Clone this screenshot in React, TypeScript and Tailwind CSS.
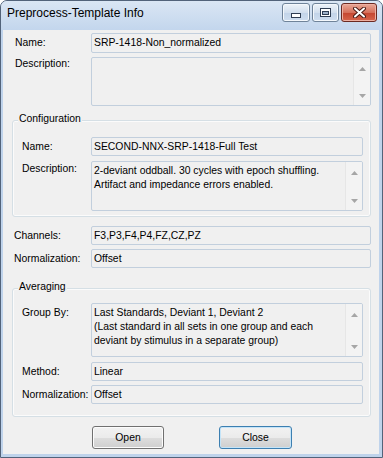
import React from 'react'

function TextBox({ value, w, h }: { value?: string; w: string; h?: string }) {
  return (
    <div className={`${w} ${h ?? 'h-[19px]'} border border-[#c2cfdd] rounded-[2px] px-[2px] pt-[2px] whitespace-nowrap overflow-hidden`}>
      {value}
    </div>
  )
}

function ArrowUp() {
  return (
    <svg width="7" height="4" viewBox="0 0 7 4">
      <path d="M0 4 L3.5 0 L7 4 Z" fill="#a6a6a6" />
    </svg>
  )
}

function ArrowDown() {
  return (
    <svg width="7" height="4" viewBox="0 0 7 4">
      <path d="M0 0 L7 0 L3.5 4 Z" fill="#a6a6a6" />
    </svg>
  )
}

function TextArea({ lines, w, h }: { lines: string[]; w: string; h: string }) {
  return (
    <div className={`${w} ${h} flex border border-[#c2cfdd] rounded-[2px] overflow-hidden`}>
      <div className="flex-1 px-[2px] pt-[2px] whitespace-nowrap overflow-hidden">
        {lines.map((l) => (
          <div key={l}>{l}</div>
        ))}
      </div>
      <div className="w-[17px] bg-[#f3f3f3] border-l border-[#e6e6e6] flex flex-col items-center justify-between pt-[9px] pb-[7px]">
        <ArrowUp />
        <ArrowDown />
      </div>
    </div>
  )
}

function GroupBox({ title, h, pt, children }: { title: string; h: string; pt: string; children: React.ReactNode }) {
  return (
    <div className={`relative ml-[9px] w-[359px] ${h} ${pt} pl-[9px] border border-[#d5dfe5] rounded-[3px] shadow-[inset_0_0_0_1px_#fbfbfb]`}>
      <div className="absolute left-[5px] -top-[9px] px-[1px] bg-[#f0f0f0]">{title}</div>
      {children}
    </div>
  )
}

export default function App() {
  return (
    <div className="w-[383px] h-[458px] font-['Liberation_Sans',Arial,sans-serif] text-[10.4px] leading-[14px] text-black">
      <div className="w-full h-full flex flex-col border border-[#52637a] rounded-t-[7px] bg-[#bfd3eb] overflow-hidden">
        {/* Title bar */}
        <div className="h-[29px] shrink-0 flex items-start bg-[linear-gradient(#dae6f4,#c3d6ed)]">
          <div className="flex-1 pl-[6px] pt-[5px] text-[12px] leading-[15px]">Preprocess-Template Info</div>
          <div className="flex gap-[2px] mt-[2px] mr-[5px]">
            <div className="w-[28px] h-[19px] rounded-[3px] border border-[#6f8399] bg-[linear-gradient(#eef3f9,#d2dfee_50%,#c2d3e8_51%,#cfdeef)] shadow-[inset_0_0_0_1px_#f4f8fc] flex items-end justify-center pb-[3px]">
              <svg width="10" height="5" viewBox="0 0 10 5">
                <rect x="0.5" y="0.5" width="9" height="4" fill="#ffffff" stroke="#2f3d52" />
              </svg>
            </div>
            <div className="w-[27px] h-[19px] rounded-[3px] border border-[#6f8399] bg-[linear-gradient(#eef3f9,#d2dfee_50%,#c2d3e8_51%,#cfdeef)] shadow-[inset_0_0_0_1px_#f4f8fc] flex items-center justify-center">
              <svg width="11" height="9" viewBox="0 0 11 9">
                <rect x="0.5" y="0.5" width="10" height="8" fill="#ffffff" stroke="#2f3d52" />
                <rect x="2.5" y="3.5" width="6" height="3" fill="#9fb2c9" stroke="#2f3d52" />
              </svg>
            </div>
            <div className="w-[36px] h-[19px] rounded-[3px] border border-[#6b2a22] bg-[linear-gradient(#e8a898,#d6705b_50%,#c4452f_51%,#d7654c)] shadow-[inset_0_0_0_1px_#eeb0a2] flex items-center justify-center">
              <svg width="13" height="11" viewBox="0 0 13 11">
                <path d="M2 1.5 L11 9.5 M11 1.5 L2 9.5" stroke="#4a1a14" strokeWidth="4" strokeLinecap="round" />
                <path d="M2 1.5 L11 9.5 M11 1.5 L2 9.5" stroke="#ffffff" strokeWidth="2" strokeLinecap="round" />
              </svg>
            </div>
          </div>
        </div>

        {/* Client area */}
        <div className="ml-[2px] mr-[3px] mb-[3px] h-[424px] bg-[#f0f0f0] pt-[3px]">
          <div className="flex pl-[12px]">
            <div className="w-[76px] pt-[3px]">Name:</div>
            <TextBox value="SRP-1418-Non_normalized" w="w-[280px]" h="h-[20px]" />
          </div>
          <div className="flex pl-[12px] mt-[4px]">
            <div className="w-[76px]">Description:</div>
            <TextArea lines={[]} w="w-[280px]" h="h-[49px]" />
          </div>

          <div className="mt-[14px]">
            <GroupBox title="Configuration" h="h-[97px]" pt="pt-[16px]">
              <div className="flex">
                <div className="w-[69px] pt-[3px]">Name:</div>
                <TextBox value="SECOND-NNX-SRP-1418-Full Test" w="w-[272px]" />
              </div>
              <div className="flex mt-[5px]">
                <div className="w-[69px] pt-[1px]">Description:</div>
                <TextArea
                  lines={['2-deviant oddball. 30 cycles with epoch shuffling.', 'Artifact and impedance errors enabled.']}
                  w="w-[272px]"
                  h="h-[50px]"
                />
              </div>
            </GroupBox>
          </div>

          <div className="flex pl-[11px] mt-[9px]">
            <div className="w-[77px] pt-[3px]">Channels:</div>
            <TextBox value="F3,P3,F4,P4,FZ,CZ,PZ" w="w-[280px]" />
          </div>
          <div className="flex pl-[11px] mt-[4px]">
            <div className="w-[77px] pt-[3px]">Normalization:</div>
            <TextBox value="Offset" w="w-[280px]" />
          </div>

          <div className="mt-[20px]">
            <GroupBox title="Averaging" h="h-[129px]" pt="pt-[14px]">
              <div className="flex">
                <div className="w-[69px] pt-[3px]">Group By:</div>
                <TextArea
                  lines={[
                    'Last Standards, Deviant 1, Deviant 2',
                    '(Last standard in all sets in one group and each',
                    'deviant by stimulus in a separate group)',
                  ]}
                  w="w-[272px]"
                  h="h-[54px]"
                />
              </div>
              <div className="flex mt-[5px]">
                <div className="w-[69px] pt-[3px]">Method:</div>
                <TextBox value="Linear" w="w-[272px]" />
              </div>
              <div className="flex mt-[4px]">
                <div className="w-[69px] pt-[3px] whitespace-nowrap">Normalization:</div>
                <TextBox value="Offset" w="w-[272px]" />
              </div>
            </GroupBox>
          </div>

          <div className="flex mt-[9px] pl-[89px]">
            <button className="w-[72px] h-[23px] rounded-[3px] border border-[#707070] bg-[linear-gradient(#f2f2f2,#ebebeb_50%,#dddddd_51%,#cfcfcf)] shadow-[inset_0_0_0_1px_#fcfcfc] flex items-center justify-center">
              Open
            </button>
            <button className="ml-[55px] w-[73px] h-[23px] rounded-[3px] border border-[#3c7fb1] bg-[linear-gradient(#f2f2f2,#ebebeb_50%,#dddddd_51%,#cfcfcf)] shadow-[inset_0_0_0_1px_#c4e4f8] flex items-center justify-center">
              Close
            </button>
          </div>
        </div>
      </div>
    </div>
  )
}
